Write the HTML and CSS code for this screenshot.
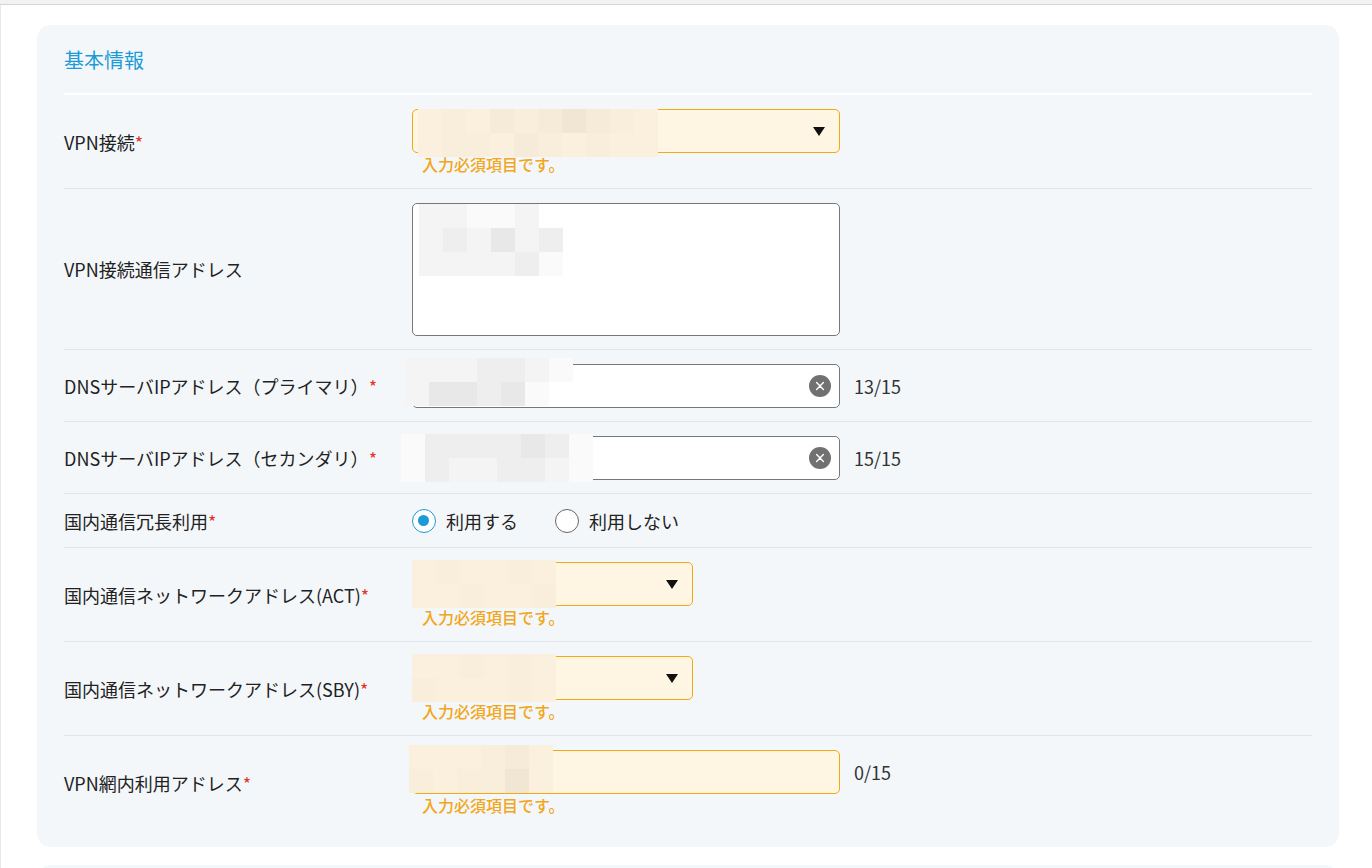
FILE: index.html
```html
<!DOCTYPE html>
<html lang="ja">
<head>
    <meta charset="utf-8">
    <title>基本情報</title>
    <link rel="stylesheet" href="styles.css">
</head>
<body>
    <div class="topbar"></div>

    <main class="page">
        <section class="card">
            <h2 class="card-title">基本情報</h2>

            <div class="row">
                <div class="label">VPN接続<span class="req">*</span></div>
                <div class="field">
                    <div class="line">
                        <div class="select warn wide">
                            <span class="arrow"></span>
                            <div class="mask mask-vpn">
                                <i class="w1"></i><i class="w2"></i><i class="w1"></i><i class="w3"></i><i class="w2"></i><i class="w3"></i><i class="w4"></i><i class="w3"></i><i class="w2"></i><i class="w1"></i>
                                <i class="w1"></i><i class="w2"></i><i class="w2"></i><i class="w1"></i><i class="w3"></i><i class="w2"></i><i class="w1"></i><i class="w2"></i><i class="w1"></i><i class="w1"></i>
                            </div>
                        </div>
                    </div>
                    <div class="error">入力必須項目です。</div>
                </div>
            </div>

            <div class="row">
                <div class="label">VPN接続通信アドレス</div>
                <div class="field">
                    <div class="line">
                        <div class="area-wrap">
                            <textarea class="area"></textarea>
                            <div class="mask mask-area">
                                <i class="g1"></i><i class="g1"></i><i class="g0"></i><i class="g0"></i><i class="g1"></i><i class="none"></i>
                                <i class="g1"></i><i class="g2"></i><i class="g1"></i><i class="g3"></i><i class="g1"></i><i class="g2"></i>
                                <i class="g1"></i><i class="g1"></i><i class="g1"></i><i class="g1"></i><i class="g2"></i><i class="g0"></i>
                            </div>
                        </div>
                    </div>
                </div>
            </div>

            <div class="row">
                <div class="label">DNSサーバIPアドレス（プライマリ）<span class="req">*</span></div>
                <div class="field">
                    <div class="line">
                        <div class="text-wrap wide">
                            <input class="text" type="text">
                            <button type="button" class="clear"><svg viewBox="0 0 22 22" width="22" height="22"><circle cx="11" cy="11" r="11" fill="#717171"/><path d="M7.6 7.6l6.8 6.8M14.4 7.6l-6.8 6.8" stroke="#fff" stroke-width="1.4" stroke-linecap="round"/></svg></button>
                            <div class="mask mask-dns1">
                                <i class="g1"></i><i class="g1"></i><i class="g1"></i><i class="g2"></i><i class="g2"></i><i class="g1"></i><i class="g0"></i>
                                <i class="g1"></i><i class="g3"></i><i class="g3"></i><i class="g2"></i><i class="g3"></i><i class="g0"></i><i class="none"></i>
                            </div>
                        </div>
                        <span class="count">13/15</span>
                    </div>
                </div>
            </div>

            <div class="row">
                <div class="label">DNSサーバIPアドレス（セカンダリ）<span class="req">*</span></div>
                <div class="field">
                    <div class="line">
                        <div class="text-wrap wide">
                            <input class="text" type="text">
                            <button type="button" class="clear"><svg viewBox="0 0 22 22" width="22" height="22"><circle cx="11" cy="11" r="11" fill="#717171"/><path d="M7.6 7.6l6.8 6.8M14.4 7.6l-6.8 6.8" stroke="#fff" stroke-width="1.4" stroke-linecap="round"/></svg></button>
                            <div class="mask mask-dns2">
                                <i class="g0"></i><i class="g2"></i><i class="g2"></i><i class="g2"></i><i class="g2"></i><i class="g3"></i><i class="g2"></i><i class="g0"></i>
                                <i class="g0"></i><i class="g2"></i><i class="g1"></i><i class="g1"></i><i class="g2"></i><i class="g2"></i><i class="g1"></i><i class="g0"></i>
                            </div>
                        </div>
                        <span class="count">15/15</span>
                    </div>
                </div>
            </div>

            <div class="row">
                <div class="label">国内通信冗長利用<span class="req">*</span></div>
                <div class="field">
                    <div class="radios">
                        <label class="radio checked"><span class="dot"></span>利用する</label>
                        <label class="radio"><span class="dot"></span>利用しない</label>
                    </div>
                </div>
            </div>

            <div class="row">
                <div class="label">国内通信ネットワークアドレス(ACT)<span class="req">*</span></div>
                <div class="field">
                    <div class="line">
                        <div class="select warn narrow">
                            <span class="arrow"></span>
                            <div class="mask mask-net">
                                <i class="w1"></i><i class="w2"></i><i class="w1"></i><i class="w1"></i><i class="w2"></i><i class="w1"></i>
                                <i class="w1"></i><i class="w1"></i><i class="w2"></i><i class="w1"></i><i class="w1"></i><i class="w2"></i>
                            </div>
                        </div>
                    </div>
                    <div class="error">入力必須項目です。</div>
                </div>
            </div>

            <div class="row">
                <div class="label">国内通信ネットワークアドレス(SBY)<span class="req">*</span></div>
                <div class="field">
                    <div class="line">
                        <div class="select warn narrow">
                            <span class="arrow"></span>
                            <div class="mask mask-net">
                                <i class="w1"></i><i class="w1"></i><i class="w2"></i><i class="w1"></i><i class="w2"></i><i class="w1"></i>
                                <i class="w2"></i><i class="w1"></i><i class="w1"></i><i class="w1"></i><i class="w2"></i><i class="w1"></i>
                            </div>
                        </div>
                    </div>
                    <div class="error">入力必須項目です。</div>
                </div>
            </div>

            <div class="row">
                <div class="label">VPN網内利用アドレス<span class="req">*</span></div>
                <div class="field">
                    <div class="line">
                        <div class="text-wrap wide">
                            <input class="text warn" type="text">
                            <div class="mask mask-inner">
                                <i class="w1"></i><i class="w1"></i><i class="w1"></i><i class="w2"></i><i class="w3"></i><i class="w1"></i>
                                <i class="w2"></i><i class="w1"></i><i class="w2"></i><i class="w2"></i><i class="w4"></i><i class="w1"></i>
                            </div>
                        </div>
                        <span class="count">0/15</span>
                    </div>
                    <div class="error">入力必須項目です。</div>
                </div>
            </div>
        </section>

        <section class="card next"></section>
    </main>
</body>
</html>
```

FILE: styles.css
```css
body {
    margin: 0;
    font-family: "Noto Sans CJK JP", "Noto Sans", sans-serif;
    color: #222;
    background-color: #fff;
}

.topbar {
    height: 4px;
    background-color: #f2f2f2;
    border-bottom: 1px solid #d5d5d5;
}

.page {
    border-left: 1px solid #e6e8ec;
    padding: 20px 33px 0 36px;
    height: 863px;
    box-sizing: border-box;
    overflow: hidden;
}

.card {
    background-color: #f4f7fa;
    border-radius: 14px;
    padding: 0 27px 18px;
}

.card.next {
    margin-top: 18px;
    height: 60px;
}

.card-title {
    margin: 0;
    padding: 20px 0 18px;
    font-size: 20px;
    font-weight: 400;
    line-height: 30px;
    color: #1b9bd7;
    border-bottom: 2px solid #fff;
}

.row {
    display: flex;
    align-items: center;
    padding: 13.5px 0;
    border-bottom: 1px solid #e1e5ea;
}

.row:last-child {
    border-bottom: none;
}

.label {
    width: 348px;
    flex-shrink: 0;
    font-size: 18px;
    line-height: 26px;
}

.req {
    color: #e5341f;
}

.line {
    display: flex;
    align-items: center;
}

.error {
    margin-left: 10px;
    font-size: 16px;
    line-height: 22px;
    font-weight: 500;
    color: #f2a618;
}

.count {
    margin-left: 14px;
    font-size: 18px;
    color: #333;
}

/* select boxes */
.select {
    position: relative;
    height: 44px;
    box-sizing: border-box;
    border: 1px solid #777;
    border-radius: 5px;
    background-color: #fff;
}

.select.warn,
.text.warn {
    border-color: #f2aa0f;
    background-color: #fff5e3;
}

.wide {
    width: 428px;
}

.narrow {
    width: 281px;
}

.arrow {
    position: absolute;
    right: 14px;
    top: 17px;
    width: 0;
    height: 0;
    border-left: 6px solid transparent;
    border-right: 6px solid transparent;
    border-top: 9px solid #111;
}

/* text fields */
.text-wrap {
    position: relative;
}

.text {
    display: block;
    width: 100%;
    height: 44px;
    box-sizing: border-box;
    border: 1px solid #777;
    border-radius: 5px;
    background-color: #fff;
    font: inherit;
    padding: 0 40px 0 12px;
}

.clear {
    position: absolute;
    right: 9px;
    top: 11px;
    padding: 0;
    border: none;
    background: none;
    width: 22px;
    height: 22px;
    cursor: pointer;
}

.clear svg {
    display: block;
}

.area-wrap {
    position: relative;
}

.area {
    display: block;
    width: 428px;
    height: 133px;
    box-sizing: border-box;
    border: 1px solid #777;
    border-radius: 5px;
    background-color: #fff;
    resize: none;
    font: inherit;
}

/* radios */
.radios {
    display: flex;
    align-items: center;
    height: 26px;
}

.radio {
    display: flex;
    align-items: center;
    font-size: 18px;
    margin-right: 37px;
    cursor: pointer;
}

.radio .dot {
    position: relative;
    width: 24px;
    height: 24px;
    box-sizing: border-box;
    border: 1px solid #666;
    border-radius: 50%;
    background-color: #fff;
    margin-right: 10px;
}

.radio.checked .dot {
    border: 1.5px solid #1b9bd7;
}

.radio.checked .dot::after {
    content: "";
    position: absolute;
    left: 5px;
    top: 5px;
    width: 11px;
    height: 11px;
    border-radius: 50%;
    background-color: #1b9bd7;
}

/* redacted values */
.mask {
    position: absolute;
    display: grid;
    grid-template-columns: repeat(var(--cols), 24px);
    grid-auto-rows: 24px;
    pointer-events: none;
}

.mask i.g0 { background-color: #fafafa; }
.mask i.g1 { background-color: #f4f4f4; }
.mask i.g2 { background-color: #eeeeee; }
.mask i.g3 { background-color: #e8e8e8; }
.mask i.w1 { background-color: #fbf0de; }
.mask i.w2 { background-color: #f9eddb; }
.mask i.w3 { background-color: #f6ebd9; }
.mask i.w4 { background-color: #f1e5d3; }

.mask-vpn {
    --cols: 10;
    left: 5px;
    top: -1px;
}

.mask-area {
    --cols: 6;
    left: 7px;
    top: 1px;
}

.mask-dns1 {
    --cols: 7;
    left: -7px;
    top: -6px;
}

.mask-dns2 {
    --cols: 8;
    left: -11px;
    top: -2px;
}

.mask-net {
    --cols: 6;
    left: -1px;
    top: -3px;
}

.mask-inner {
    --cols: 6;
    left: -3px;
    top: -5px;
}
```
